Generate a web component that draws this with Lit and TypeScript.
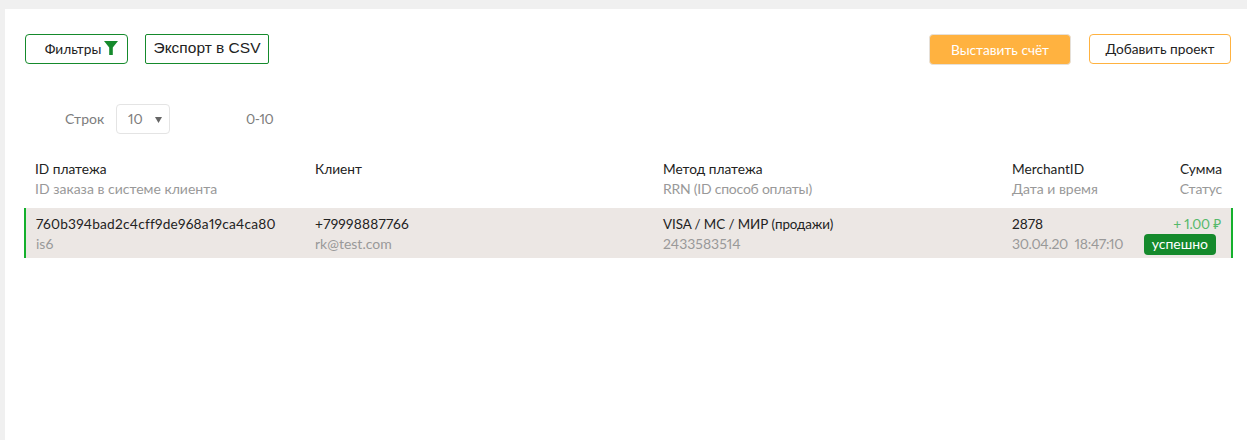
import { LitElement, html, css } from 'lit'
import { customElement } from 'lit/decorators.js'

@customElement('app-root')
export class AppRoot extends LitElement {
  static styles = css`
    :host {
      display: block;
      height: 440px;
      overflow: hidden;
      background: #f0f0f0;
      padding: 9px 0 0 5px;
      box-sizing: border-box;
      font-family: Lato, 'Noto Sans', sans-serif;
      font-size: 14px;
      font-feature-settings: 'pnum';
      color: #222;
    }

    .panel {
      background: #fff;
      height: 431px;
      padding: 25px 14px 0 19px;
      box-sizing: border-box;
    }

    /* toolbar */
    .toolbar {
      display: flex;
      align-items: flex-start;
      padding: 0 2px 0 1px;
    }

    .btn {
      height: 30px;
      box-sizing: border-box;
      border-radius: 4px;
      background: #fff;
      display: flex;
      align-items: center;
      justify-content: center;
      font: inherit;
      font-size: 13.7px;
      color: #222;
      padding: 0 0 1px;
    }

    .green {
      border: 1px solid #158a2c;
    }

    .filters {
      width: 103px;
      padding-left: 10px;
      gap: 3px;
      margin-right: 17px;
    }

    .filters svg {
      margin-top: -1px;
    }

    .export {
      width: 124px;
      font-family: 'Liberation Sans', Arial, sans-serif;
      font-size: 15.5px;
      padding-bottom: 2px;
      border-radius: 2px;
    }

    .spacer {
      flex: 1;
    }

    .invoice {
      width: 142px;
      height: 31px;
      background: #ffb240;
      border: 1px solid #e6e0d8;
      color: #fff;
      margin-right: 18px;
    }

    .add {
      width: 142px;
      border: 1px solid #ffb240;
    }

    /* pager */
    .pager {
      display: flex;
      align-items: center;
      height: 30px;
      margin-top: 39px;
      padding-left: 41px;
      color: #7d7d7d;
    }

    .pager span {
      margin-top: -1px;
    }

    .pager-label {
      width: 51px;
    }

    .select {
      width: 54px;
      height: 30px;
      box-sizing: border-box;
      border: 1px solid #e4e4e4;
      border-radius: 4px;
      display: flex;
      align-items: center;
      justify-content: space-between;
      padding: 0 7px 0 11px;
      margin-right: 76px;
    }

    .select svg {
      display: block;
    }

    .range {
      letter-spacing: -0.5px;
    }

    /* table */
    .cols {
      display: grid;
      grid-template-columns: 280px 348px 349px 1fr auto;
    }

    .head {
      margin-top: 25px;
      padding: 0 11px 0 11px;
      height: 49px;
      box-sizing: border-box;
    }

    .row {
      grid-template-columns: 279px 348px 349px 1fr auto;
      height: 50px;
      box-sizing: border-box;
      padding: 6px 10px 0 10px;
      background: #ece7e4;
      border-left: 2px solid #14b02c;
      border-right: 2px solid #14b02c;
    }

    .cell {
      display: flex;
      flex-direction: column;
    }

    .top,
    .sub {
      line-height: 20px;
      white-space: nowrap;
    }

    .top {
      font-size: 13.7px;
      color: #222;
    }

    .sub {
      color: #999;
    }

    .wide {
      letter-spacing: 0.23px;
    }

    .tight {
      letter-spacing: -0.24px;
    }

    .top.tight {
      font-size: 13.4px;
      letter-spacing: -0.08px;
    }

    .narrow {
      letter-spacing: -0.3px;
    }

    .end {
      align-items: flex-end;
    }

    .amount {
      color: #56b96a;
      letter-spacing: -0.2px;
    }

    .badge {
      background: #158a2c;
      color: #fff;
      border-radius: 4px;
      line-height: 20px;
      height: 21px;
      padding: 0 8px;
      margin-right: 5px;
    }
  `

  render() {
    return html`
      <div class="panel">
        <div class="toolbar">
          <button class="btn green filters">
            Фильтры
            <svg width="14" height="14" viewBox="0 0 14 14">
              <path d="M0 0h14L8.8 6.5V14H5.2V6.5z" fill="#158a2c"></path>
            </svg>
          </button>
          <button class="btn green export">Экспорт в CSV</button>
          <div class="spacer"></div>
          <button class="btn invoice">Выставить счёт</button>
          <button class="btn add">Добавить проект</button>
        </div>

        <div class="pager">
          <span class="pager-label">Строк</span>
          <div class="select">
            <span>10</span>
            <svg width="7" height="7" viewBox="0 0 7 7"><path d="M0 1h7L3.5 7z" fill="#666"></path></svg>
          </div>
          <span class="range">0-10</span>
        </div>

        <div class="cols head">
          <div class="cell"><span class="top">ID платежа</span><span class="sub">ID заказа в системе клиента</span></div>
          <div class="cell"><span class="top">Клиент</span></div>
          <div class="cell"><span class="top">Метод платежа</span><span class="sub tight">RRN (ID способ оплаты)</span></div>
          <div class="cell"><span class="top">MerchantID</span><span class="sub">Дата и время</span></div>
          <div class="cell end"><span class="top">Сумма</span><span class="sub tight">Статус</span></div>
        </div>

        <div class="cols row">
          <div class="cell"><span class="top wide">760b394bad2c4cff9de968a19ca4ca80</span><span class="sub">is6</span></div>
          <div class="cell"><span class="top wide">+79998887766</span><span class="sub">rk@test.com</span></div>
          <div class="cell"><span class="top tight">VISA / MC / МИР (продажи)</span><span class="sub">2433583514</span></div>
          <div class="cell"><span class="top">2878</span><span class="sub narrow">30.04.20&nbsp; 18:47:10</span></div>
          <div class="cell end"><span class="top amount">+ 1.00 ₽</span><span class="badge">успешно</span></div>
        </div>
      </div>
    `
  }
}
